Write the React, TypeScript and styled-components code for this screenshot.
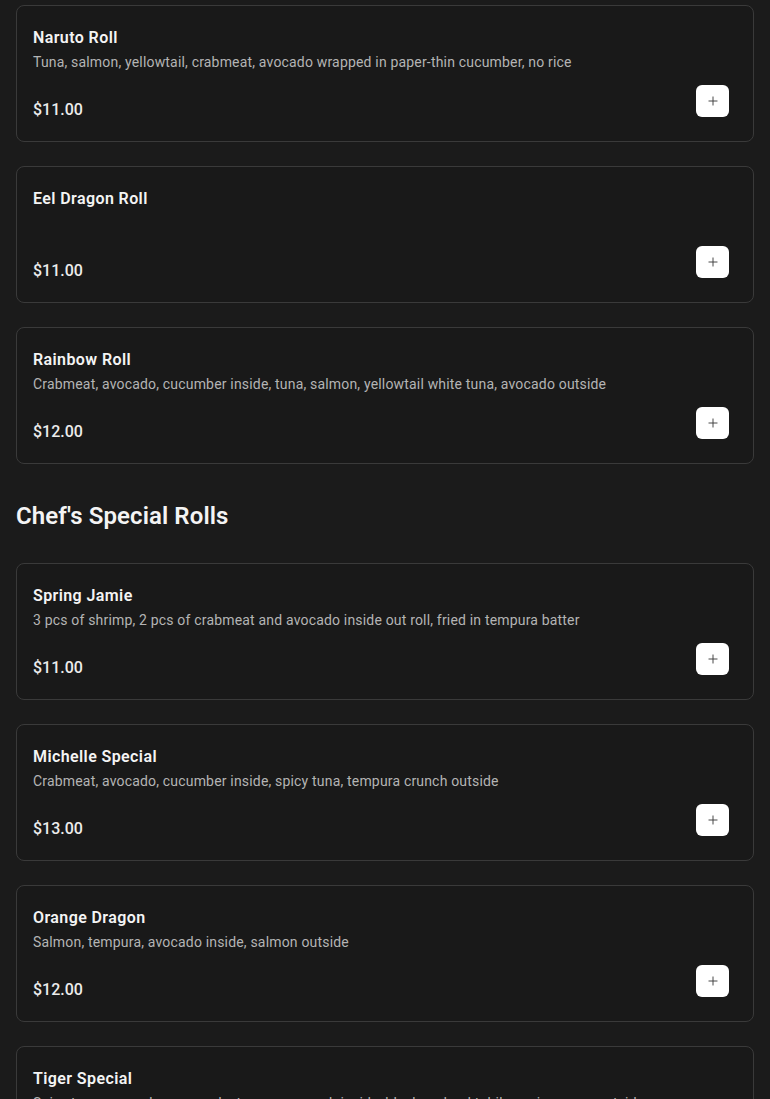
import { FC } from "react";
import styled, { createGlobalStyle } from "styled-components";
import { Plus } from "lucide-react";

interface IMenuItem {
	id: number;
	name: string;
	description: string;
	price: number;
}

interface ISection {
	title?: string;
	items: IMenuItem[];
}

const sections: ISection[] = [
	{
		items: [
			{
				id: 1,
				name: "Naruto Roll",
				description: "Tuna, salmon, yellowtail, crabmeat, avocado wrapped in paper-thin cucumber, no rice",
				price: 11,
			},
			{ id: 2, name: "Eel Dragon Roll", description: "", price: 11 },
			{
				id: 3,
				name: "Rainbow Roll",
				description: "Crabmeat, avocado, cucumber inside, tuna, salmon, yellowtail white tuna, avocado outside",
				price: 12,
			},
		],
	},
	{
		title: "Chef's Special Rolls",
		items: [
			{
				id: 4,
				name: "Spring Jamie",
				description: "3 pcs of shrimp, 2 pcs of crabmeat and avocado inside out roll, fried in tempura batter",
				price: 11,
			},
			{
				id: 5,
				name: "Michelle Special",
				description: "Crabmeat, avocado, cucumber inside, spicy tuna, tempura crunch outside",
				price: 13,
			},
			{
				id: 6,
				name: "Orange Dragon",
				description: "Salmon, tempura, avocado inside, salmon outside",
				price: 12,
			},
			{
				id: 7,
				name: "Tiger Special",
				description: "Spicy tuna, cucumber, avocado, tempura crunch inside, black and red tobiko, spicy mayo outside",
				price: 13,
			},
		],
	},
];

const formatPrice = (price: number) => `$${price.toFixed(2)}`;

const App: FC = () => {
	return (
		<>
			<GlobalStyle />
			<Page>
				{sections.map((section, index) => (
					<Section key={index}>
						{section.title && <SectionTitle>{section.title}</SectionTitle>}

						<ItemsList>
							{section.items.map((item) => (
								<Card key={item.id}>
									<ItemName>{item.name}</ItemName>
									<ItemDescription>{item.description}</ItemDescription>
									<CardFooter>
										<Price>{formatPrice(item.price)}</Price>
										<AddButton type="button" aria-label={`Add ${item.name}`}>
											<Plus size={14} strokeWidth={1.6} />
										</AddButton>
									</CardFooter>
								</Card>
							))}
						</ItemsList>
					</Section>
				))}
			</Page>
		</>
	);
};

export default App;

const GlobalStyle = createGlobalStyle`
	* {
		box-sizing: border-box;
	}

	body {
		margin: 0;
		background: #1b1b1b;
		font-family: Roboto, "Noto Sans", sans-serif;
		color: #f2f2f2;
	}
`;

const Page = styled.main`
	padding: 5px 16px 40px;
`;

const Section = styled.section`
	display: flex;
	flex-direction: column;
`;

const SectionTitle = styled.h2`
	margin: 36px 0 31px;
	font-size: 24px;
	line-height: 32px;
	font-weight: 600;
	letter-spacing: 0.1px;
	color: #f4f4f4;
`;

const ItemsList = styled.ul`
	display: flex;
	flex-direction: column;
	gap: 24px;
	margin: 0;
	padding: 0;
	list-style: none;
`;

const Card = styled.li`
	display: flex;
	flex-direction: column;
	padding: 20px 16px 19px;
	background: #191919;
	border: 1px solid #3a3a3a;
	border-radius: 8px;
`;

const ItemName = styled.h3`
	margin: 0;
	font-size: 16px;
	line-height: 24px;
	font-weight: 600;
	letter-spacing: 0.4px;
	color: #f4f4f4;
`;

const ItemDescription = styled.p`
	margin: 2px 0 0;
	min-height: 20px;
	font-size: 14px;
	line-height: 20px;
	letter-spacing: 0.18px;
	color: #b4b4b4;
`;

const CardFooter = styled.div`
	display: flex;
	justify-content: space-between;
	align-items: flex-start;
	margin-top: 13px;
	padding-right: 8px;
`;

const Price = styled.span`
	margin-top: 13px;
	font-size: 16px;
	line-height: 24px;
	font-weight: 500;
	color: #ececec;
`;

const AddButton = styled.button`
	display: flex;
	align-items: center;
	justify-content: center;
	width: 33px;
	height: 32px;
	padding: 0;
	border: none;
	border-radius: 6px;
	background: #ffffff;
	color: #3a3a3a;
	cursor: pointer;
`;
